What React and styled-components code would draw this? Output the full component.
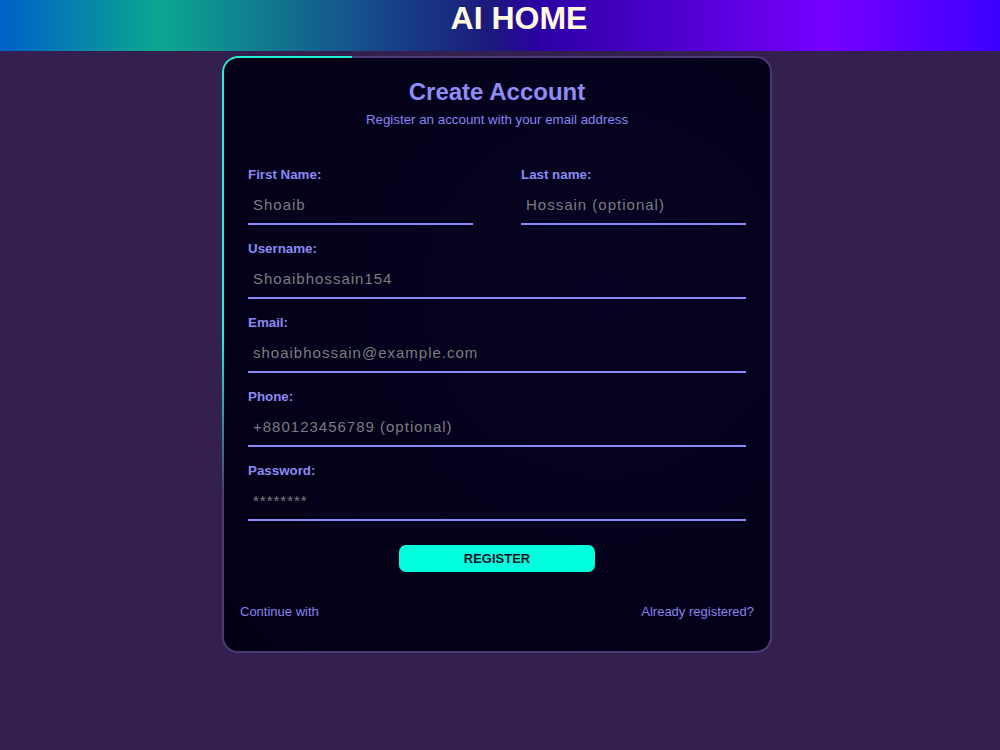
import React from "react";
import styled, { createGlobalStyle } from "styled-components";

const GlobalStyle = createGlobalStyle`
  html, body {
    margin: 0;
    padding: 0;
    background: #33204f;
    font-family: "Liberation Sans", Arial, sans-serif;
  }
`;

const Header = styled.header`
  height: 51px;
  display: flex;
  justify-content: center;
  align-items: flex-start;
  padding-left: 38px;
  box-sizing: border-box;
  background: linear-gradient(
    90deg,
    #0060c9 0%,
    #0aa88f 16%,
    #15588e 34%,
    #1b1a7c 49%,
    #2c00a4 54%,
    #7600ff 83%,
    #3c00ff 100%
  );
`;

const Brand = styled.h1`
  margin: 0;
  font-size: 32px;
  line-height: 36px;
  font-weight: 700;
  color: #fff9de;
`;

const Page = styled.main`
  display: flex;
  justify-content: center;
  padding: 5px 6px 0 0;
`;

const Card = styled.section`
  position: relative;
  width: 550px;
  box-sizing: border-box;
  padding: 20px 16px 31px;
  border: 2px solid #4c3a72;
  border-radius: 16px;
  background: radial-gradient(circle at 70% 40%, #070322 0%, #04011a 60%, #030016 100%);

  /* glowing corner sweep on the border */
  &::before {
    content: "";
    position: absolute;
    top: -2px;
    left: -2px;
    width: 130px;
    height: 440px;
    box-sizing: border-box;
    border-top: 2px solid #22f0d6;
    border-left: 2px solid #22f0d6;
    border-top-left-radius: 16px;
    -webkit-mask-image: linear-gradient(to bottom, #000 64%, transparent 100%);
    mask-image: linear-gradient(to bottom, #000 64%, transparent 100%);
    pointer-events: none;
  }
`;

const Title = styled.h2`
  margin: 0;
  text-align: center;
  font-size: 24px;
  line-height: 28px;
  font-weight: 700;
  color: #8f8cf5;
`;

const Subtitle = styled.p`
  margin: 6px 0 0;
  text-align: center;
  font-size: 13.33px;
  line-height: 16px;
  color: #8985f2;
`;

const Form = styled.form`
  display: flex;
  flex-direction: column;
  gap: 16px;
  padding: 0 8px;
  margin-top: 39px;
`;

const NameRow = styled.div`
  display: grid;
  grid-template-columns: 1fr 1fr;
  column-gap: 48px;
`;

const Field = styled.div`
  display: flex;
  flex-direction: column;
`;

const Label = styled.label`
  font-size: 13.33px;
  line-height: 16px;
  font-weight: 700;
  color: #8d8af3;
  margin-bottom: 3px;
`;

const Input = styled.input`
  height: 39px;
  box-sizing: border-box;
  padding: 0 5px;
  border: none;
  border-bottom: 2px solid #8b88fa;
  background: transparent;
  font-family: "Liberation Sans", Arial, sans-serif;
  font-size: 15px;
  letter-spacing: 1px;
  color: #cfcfe8;
  outline: none;

  &::placeholder {
    color: #7c7c80;
  }
`;

const Actions = styled.div`
  display: flex;
  justify-content: center;
  margin-top: 8px;
`;

const SubmitButton = styled.button`
  width: 196px;
  height: 27px;
  border: none;
  border-radius: 7px;
  background: #00ffdd;
  color: #14102a;
  font-family: "Liberation Sans", Arial, sans-serif;
  font-size: 13px;
  font-weight: 700;
  cursor: pointer;
`;

const Footer = styled.div`
  display: flex;
  justify-content: space-between;
  margin-top: 32px;
  font-size: 13px;
  line-height: 16px;
  color: #8884ea;
`;

const FooterLink = styled.a`
  color: inherit;
  text-decoration: none;
`;

const fields = [
  { id: "username", label: "Username:", placeholder: "Shoaibhossain154" },
  { id: "email", label: "Email:", placeholder: "shoaibhossain@example.com", type: "email" },
  { id: "phone", label: "Phone:", placeholder: "+880123456789 (optional)" },
  { id: "password", label: "Password:", placeholder: "********" },
];

function App() {
  return (
    <>
      <GlobalStyle />
      <Header>
        <Brand>AI HOME</Brand>
      </Header>
      <Page>
        <Card>
          <Title>Create Account</Title>
          <Subtitle>Register an account with your email address</Subtitle>
          <Form onSubmit={(e) => e.preventDefault()}>
            <NameRow>
              <Field>
                <Label htmlFor="first">First Name:</Label>
                <Input id="first" placeholder="Shoaib" />
              </Field>
              <Field>
                <Label htmlFor="last">Last name:</Label>
                <Input id="last" placeholder="Hossain (optional)" />
              </Field>
            </NameRow>
            {fields.map((f) => (
              <Field key={f.id}>
                <Label htmlFor={f.id}>{f.label}</Label>
                <Input id={f.id} type={f.type || "text"} placeholder={f.placeholder} />
              </Field>
            ))}
            <Actions>
              <SubmitButton type="submit">REGISTER</SubmitButton>
            </Actions>
          </Form>
          <Footer>
            <FooterLink href="#">Continue with</FooterLink>
            <FooterLink href="#">Already registered?</FooterLink>
          </Footer>
        </Card>
      </Page>
    </>
  );
}

export default App;
